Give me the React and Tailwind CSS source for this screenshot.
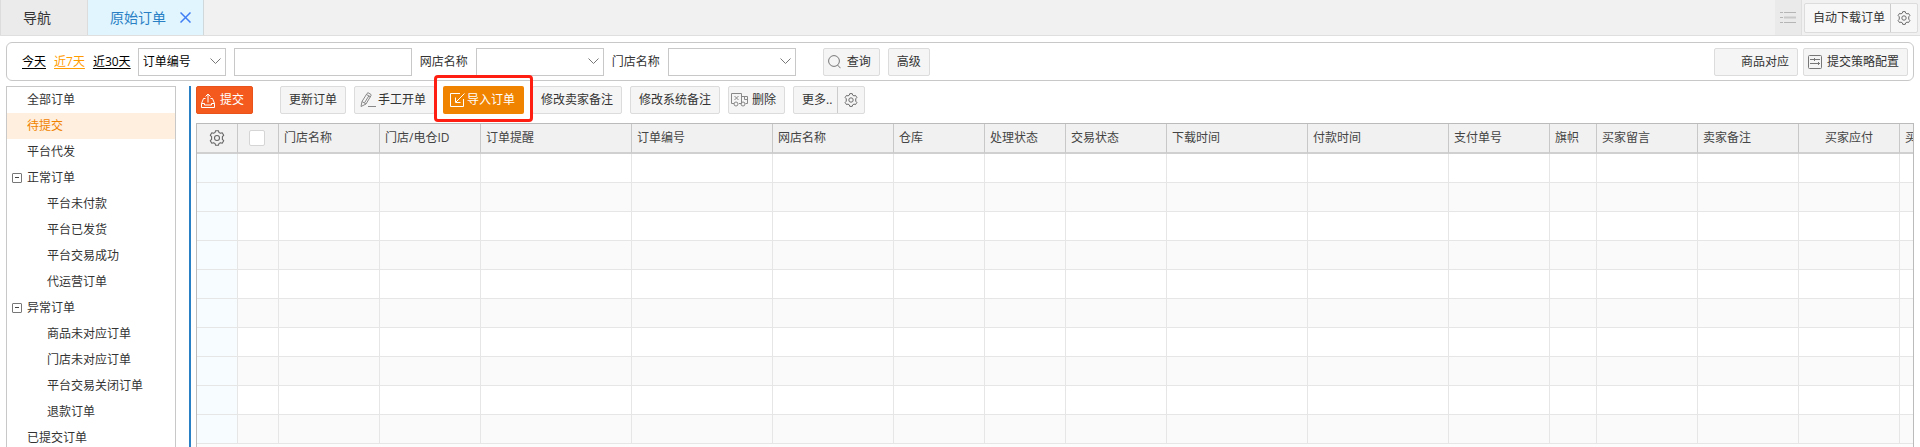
import React, { useState } from 'react';

const columns = [
  { label: '门店名称', width: 'w-[101px]' },
  { label: '门店/电仓ID', width: 'w-[101px]' },
  { label: '订单提醒', width: 'w-[151px]' },
  { label: '订单编号', width: 'w-[141px]' },
  { label: '网店名称', width: 'w-[121px]' },
  { label: '仓库', width: 'w-[91px]' },
  { label: '处理状态', width: 'w-[81px]' },
  { label: '交易状态', width: 'w-[101px]' },
  { label: '下载时间', width: 'w-[141px]' },
  { label: '付款时间', width: 'w-[141px]' },
  { label: '支付单号', width: 'w-[101px]' },
  { label: '旗帜', width: 'w-[47px]' },
  { label: '买家留言', width: 'w-[101px]' },
  { label: '卖家备注', width: 'w-[101px]' },
  { label: '买家应付', width: 'w-[101px]', center: true },
  { label: '买家实付', width: 'w-[101px]' },
];

const tree = [
  { label: '全部订单' },
  { label: '待提交' },
  { label: '平台代发' },
  { label: '正常订单', group: true },
  { label: '平台未付款', child: true },
  { label: '平台已发货', child: true },
  { label: '平台交易成功', child: true },
  { label: '代运营订单', child: true },
  { label: '异常订单', group: true },
  { label: '商品未对应订单', child: true },
  { label: '门店未对应订单', child: true },
  { label: '平台交易关闭订单', child: true },
  { label: '退款订单', child: true },
  { label: '已提交订单' },
];

const rows = Array.from({ length: 10 }, (_, i) => i);

const GearIcon = ({ size = 14 }) => (
  <svg width={size} height={size} viewBox="0 0 16 16" fill="none" stroke="#666" strokeWidth="1.1" strokeLinejoin="round">
    <path d="M6.1 2.4 6.6.7h2.8l.5 1.7 1.5.9 1.8-.5 1.5 2.5-1.3 1.3v2.8l1.3 1.3-1.5 2.5-1.8-.5-1.5.9-.5 1.7H6.6l-.5-1.7-1.5-.9-1.8.5-1.5-2.5 1.3-1.3V6.6L1.3 5.3l1.5-2.5 1.8.5z" />
    <circle cx="8" cy="8" r="2.5" />
  </svg>
);

const SubmitIcon = () => (
  <svg width="14" height="15" viewBox="0 0 14 15" fill="none" stroke="#fff">
    <path d="M4.5 5.5h-2l-2 5v4h13v-4l-2-5h-2" />
    <path d="M.5 10.5h3v1.5h7v-1.5h3M7 9.5V1M4.500 3.500 7 1l2.500 2.500" />
  </svg>
);

const PencilIcon = () => (
  <svg width="16" height="16" viewBox="0 0 16 16" fill="none" stroke="#888">
    <path d="M1 14.5 2 9.5 7 1.5l1-.8 3 1.8v1.2L6 12zM2 9.5 6 12M6.5 2.5l4 2.4M4.5 10.8l4.4-7M8 14.5h8" />
  </svg>
);

const ImportIcon = () => (
  <svg width="15" height="14" viewBox="0 0 15 14" fill="none" stroke="#fff">
    <path d="M10 .5H.5v13h13V6M14.5.5 6 9M5.5 4.5v5h5" />
  </svg>
);

const TruckIcon = () => (
  <svg width="17" height="14" viewBox="0 0 17 14" fill="none" stroke="#888">
    <path d="M3 10.5H.5V.5h10v10H8M10.5 3.5h6v7h-2M13.5 3.5v3h3M3.500 3l4 4M7.500 3l-4 4" />
    <circle cx="5" cy="11" r="2" />
    <circle cx="12" cy="11" r="2" />
  </svg>
);

const SearchIcon = () => (
  <svg width="13" height="14" viewBox="0 0 13 14" fill="none" stroke="#777">
    <circle cx="6" cy="6" r="5.4" />
    <path d="m9.5 10 3 3.2" />
  </svg>
);

const ConfigIcon = () => (
  <svg width="14" height="14" viewBox="0 0 14 14" fill="none" stroke="#777">
    <rect x=".5" y=".5" width="13" height="13" rx="1" />
    <path d="M2 4.5h10M2 8.5h10M6.5 3v3M10.5 7v3" />
  </svg>
);

const ListIcon = () => (
  <svg width="16" height="11" viewBox="0 0 16 11" fill="none" stroke="#b5b5b5">
    <path d="M0 .5h3M4 .5h12M0 5.5h3M0 10.5h3M4 10.5h12" />
    <path d="M4 5.5h12" stroke="#c8c8c8" strokeWidth="2" />
  </svg>
);

const button = 'flex h-7 shrink-0 items-center rounded-xs border border-[#dcdcdc] bg-[#f5f5f5] text-[#333]';

const SelectBox = ({ id, label, width, children }) => (
  <div className={`relative shrink-0 ${width}`}>
    <select
      id={id}
      aria-label={label}
      className="h-7 w-full appearance-none border border-[#c8c8c8] bg-white pr-6 pl-1 text-black outline-none"
    >
      {children}
    </select>
    <svg className="pointer-events-none absolute top-2.5 right-[5px]" width="11" height="7" viewBox="0 0 11 7" fill="none" stroke="#777">
      <path d="m.5.5 5 5 5-5" />
    </svg>
  </div>
);

const App = () => {
  const [range, setRange] = useState('近7天');
  const [selected, setSelected] = useState('待提交');
  const [keyword, setKeyword] = useState('');

  return (
    <div className="flex h-screen flex-col overflow-hidden bg-white font-['Open_Sans','Noto_Sans_CJK_SC',sans-serif] text-xs text-[#333]">
      {/* Tabs */}
      <header className="flex h-9 shrink-0 border-b border-[#dfdfdf] bg-[#f1f1f1] pr-0.5">
        <nav className="flex text-sm">
          <a href="#nav" className="flex w-22 items-center border-x border-[#dcdcdc] bg-[#ebebeb] pl-[22px]">
            导航
          </a>
          <div className="flex items-center border-r border-[#d0d8dc] bg-[#e0f5fd] pr-3 pl-[22px] text-[#2a80c5]">
            <a href="#orders">原始订单</a>
            <button type="button" aria-label="关闭" className="ml-3.5">
              <svg width="11" height="11" viewBox="0 0 11 11" fill="none" stroke="#3f7df5" strokeWidth="1.5">
                <path d="m.5.5 10 10M10.500.500l-10 10" />
              </svg>
            </button>
          </div>
        </nav>
        <div className="ml-auto flex">
          <button type="button" aria-label="标签列表" className="mr-0.5 flex w-[27px] items-center justify-center border-r border-[#dfdfdf] bg-[#eaeaea]">
            <ListIcon />
          </button>
          <div className="mt-[3px] flex h-[30px] rounded-xs border border-[#dcdcdc] bg-[#f7f7f7]">
            <button type="button" className="border-r border-[#ccc] pr-[5px] pl-2">自动下载订单</button>
            <button type="button" aria-label="下载设置" className="px-1.5">
              <GearIcon />
            </button>
          </div>
        </div>
      </header>

      {/* Search bar */}
      <form
        onSubmit={(e) => e.preventDefault()}
        className="mx-1.5 mt-1.5 flex shrink-0 items-center rounded-md border border-[#c8c8c8] pt-[5px] pr-[5px] pb-1 pl-[15px]"
      >
        <div className="flex gap-2">
          {['今天', '近7天', '近30天'].map((r) => (
            <button
              key={r}
              type="button"
              onClick={() => setRange(r)}
              className={`underline underline-offset-2 ${range === r ? 'text-[#ff9c00]' : 'text-black'}`}
            >
              {r}
            </button>
          ))}
        </div>
        <div className="ml-[7px] flex items-center gap-2">
          <SelectBox id="field" label="查询字段" width="w-22">
            <option>订单编号</option>
          </SelectBox>
          <input
            type="text"
            aria-label="关键字"
            value={keyword}
            onChange={(e) => setKeyword(e.target.value)}
            className="h-7 w-[178px] border border-[#c8c8c8] px-1 outline-none"
          />
          <label htmlFor="shop">网店名称</label>
          <SelectBox id="shop" width="w-32">
            <option></option>
          </SelectBox>
          <label htmlFor="store">门店名称</label>
          <SelectBox id="store" width="w-32">
            <option></option>
          </SelectBox>
        </div>
        <button type="submit" className={`${button} ml-[27px] gap-1.5 pr-2 pl-1`}>
          <SearchIcon />
          <span>查询</span>
        </button>
        <button type="button" className={`${button} ml-2 px-2`}>高级</button>
        <div className="ml-auto flex gap-[5px]">
          <button type="button" className={`${button} pr-2 pl-[26px]`}>商品对应</button>
          <button type="button" className={`${button} gap-[5px] pr-2 pl-1`}>
            <ConfigIcon />
            <span>提交策略配置</span>
          </button>
        </div>
      </form>

      <div className="mt-[5px] flex min-h-0 flex-1 px-1.5">
        {/* Order tree */}
        <aside className="w-[170px] shrink-0 overflow-hidden border-x border-t border-[#c8c8c8]">
          <ul>
            {tree.map((item) => (
              <li key={item.label}>
                <button
                  type="button"
                  onClick={() => setSelected(item.label)}
                  className={`flex h-[26px] w-full items-center gap-[5px] ${
                    item.group ? 'pl-[5px]' : item.child ? 'pl-10' : 'pl-5'
                  } ${selected === item.label ? 'bg-[#ffefdf] text-[#f08300]' : ''}`}
                >
                  {item.group && (
                    <svg width="10" height="10" viewBox="0 0 10 10" fill="none" stroke="#777">
                      <rect x=".5" y=".5" width="9" height="9" rx=".5" />
                      <path d="M3 4.500h4" stroke="#444" />
                    </svg>
                  )}
                  <span>{item.label}</span>
                </button>
              </li>
            ))}
          </ul>
        </aside>

        <main className="ml-[13px] flex min-w-0 flex-1 flex-col border-l-2 border-[#2a80c5] pl-[5px]">
          {/* Toolbar */}
          <div className="flex shrink-0 gap-2">
            <button type="button" className="mr-[19px] flex h-7 items-center gap-[5px] rounded-xs border border-[#e9521a] bg-[#f45a1d] pr-2 pl-1 text-white">
              <SubmitIcon />
              <span>提交</span>
            </button>
            <button type="button" className={`${button} px-2`}>更新订单</button>
            <button type="button" className={`${button} gap-0.5 pr-2 pl-[5px]`}>
              <PencilIcon />
              <span>手工开单</span>
            </button>
            <div className="relative z-10">
              <button type="button" className="flex h-7 items-center gap-0.5 rounded-xs bg-[#f08300] pr-[9px] pl-[7px] text-white">
                <ImportIcon />
                <span>导入订单</span>
              </button>
              <span className="pointer-events-none absolute -inset-x-[9px] -top-[11px] -bottom-2 rounded-sm border-3 border-[#ff1e12]" />
            </div>
            <button type="button" className={`${button} px-2`}>修改卖家备注</button>
            <button type="button" className={`${button} px-2`}>修改系统备注</button>
            <button type="button" className={`${button} gap-1 pr-2 pl-0.5`}>
              <TruckIcon />
              <span>删除</span>
            </button>
            <div className={button}>
              <button type="button" className="h-full border-r border-[#ccc] pr-[5px] pl-2">更多..</button>
              <button type="button" aria-label="工具栏设置" className="h-full px-1.5">
                <GearIcon />
              </button>
            </div>
          </div>

          {/* Orders grid */}
          <div className="mt-[9px] min-h-0 flex-1 overflow-hidden border-x border-t border-[#bbb] bg-[#fcfcfc]">
            <table className="w-full table-fixed border-separate border-spacing-0">
              <colgroup>
                <col className="w-[41px]" />
                <col className="w-[41px]" />
                {columns.map((c) => (
                  <col key={c.label} className={c.width} />
                ))}
              </colgroup>
              <thead className="bg-[#f1f1f1] text-[#444]">
                <tr className="h-[30px]">
                  <th className="border-r border-b-2 border-r-[#c8c8c8] border-b-[#d0d0d0] p-0">
                    <button type="button" aria-label="列设置" className="block w-full pl-3">
                      <GearIcon size={16} />
                    </button>
                  </th>
                  <th className="border-r border-b-2 border-r-[#c8c8c8] border-b-[#d0d0d0] p-0 pl-[11px]">
                    <input type="checkbox" aria-label="全选" className="block size-4 appearance-none rounded-xs border border-[#d5d5d5] bg-white" />
                  </th>
                  {columns.map((c) => (
                    <th
                      key={c.label}
                      className={`overflow-hidden border-r border-b-2 border-r-[#c8c8c8] border-b-[#d0d0d0] p-0 font-normal whitespace-nowrap ${
                        c.center ? 'text-center' : 'pl-[5px] text-left'
                      }`}
                    >
                      {c.label}
                    </th>
                  ))}
                </tr>
              </thead>
              <tbody>
                {rows.map((r) => (
                  <tr key={r} className="h-[29px] bg-white even:bg-[#fafafa]">
                    <td className="border-r border-b border-[#e6e6e6] bg-[#f7fcff] p-0" />
                    <td className="border-r border-b border-[#e6e6e6] p-0" />
                    {columns.map((c) => (
                      <td key={c.label} className="border-r border-b border-[#e6e6e6] p-0" />
                    ))}
                  </tr>
                ))}
              </tbody>
            </table>
          </div>
        </main>
      </div>
    </div>
  );
};

export default App;
